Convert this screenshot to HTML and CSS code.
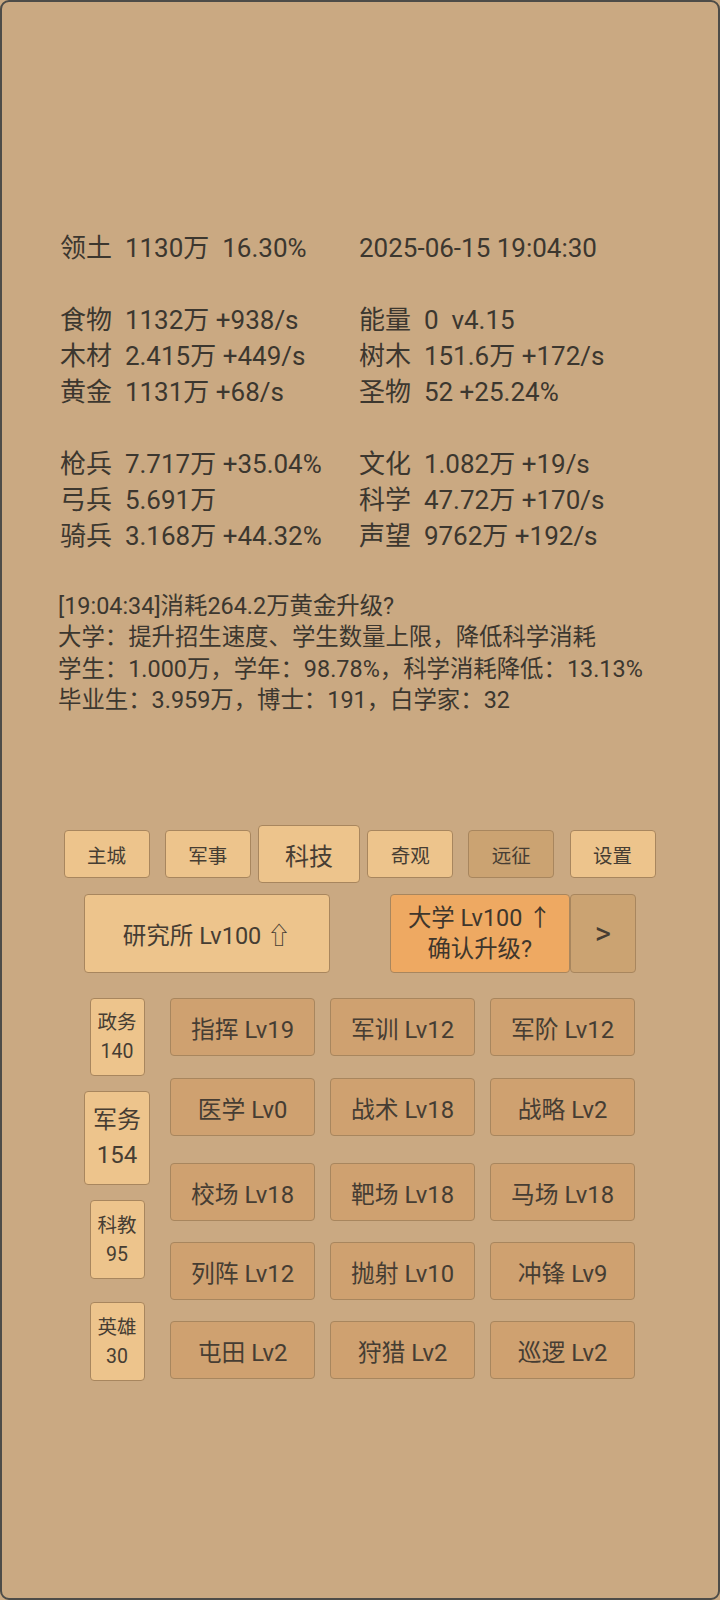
FILE: index.html
```html
<!DOCTYPE html>
<html lang="zh-CN">
<head>
<meta charset="utf-8">
<title>科技</title>
<link rel="stylesheet" href="styles.css">
</head>
<body>
<div class="page">
  <div class="stats">
    <div class="col left">
      <div class="line">领土  1130万  16.30%</div>
      <div class="line"></div>
      <div class="line">食物  1132万 +938/s</div>
      <div class="line">木材  2.415万 +449/s</div>
      <div class="line">黄金  1131万 +68/s</div>
      <div class="line"></div>
      <div class="line">枪兵  7.717万 +35.04%</div>
      <div class="line">弓兵  5.691万</div>
      <div class="line">骑兵  3.168万 +44.32%</div>
    </div>
    <div class="col right">
      <div class="line">2025-06-15 19:04:30</div>
      <div class="line"></div>
      <div class="line">能量  0  v4.15</div>
      <div class="line">树木  151.6万 +172/s</div>
      <div class="line">圣物  52 +25.24%</div>
      <div class="line"></div>
      <div class="line">文化  1.082万 +19/s</div>
      <div class="line">科学  47.72万 +170/s</div>
      <div class="line">声望  9762万 +192/s</div>
    </div>
  </div>

  <div class="log">
    <div class="log-line">[19:04:34]消耗264.2万黄金升级?</div>
    <div class="log-line">大学：提升招生速度、学生数量上限，降低科学消耗</div>
    <div class="log-line">学生：1.000万，学年：98.78%，科学消耗降低：13.13%</div>
    <div class="log-line">毕业生：3.959万，博士：191，白学家：32</div>
  </div>

  <div class="tabs">
    <div class="tab-cell"><div class="tab">主城</div></div>
    <div class="tab-cell"><div class="tab">军事</div></div>
    <div class="tab-cell"><div class="tab active">科技</div></div>
    <div class="tab-cell"><div class="tab">奇观</div></div>
    <div class="tab-cell"><div class="tab dim">远征</div></div>
    <div class="tab-cell"><div class="tab">设置</div></div>
  </div>

  <div class="actions">
    <div class="action-cell">
      <div class="btn-main">研究所 Lv100 ⇧</div>
    </div>
    <div class="action-cell">
      <div class="btn-group">
        <div class="btn-confirm">大学 Lv100 ↑<br>确认升级?</div>
        <div class="btn-next">&gt;</div>
      </div>
    </div>
  </div>

  <div class="bottom">
    <div class="side">
      <div class="side-btn s1">政务<br>140</div>
      <div class="side-btn active">军务<br>154</div>
      <div class="side-btn s3">科教<br>95</div>
      <div class="side-btn s4">英雄<br>30</div>
    </div>
    <div class="grid">
      <div class="grid-row">
        <div class="tech">指挥 Lv19</div>
        <div class="tech">军训 Lv12</div>
        <div class="tech">军阶 Lv12</div>
      </div>
      <div class="grid-row r2">
        <div class="tech">医学 Lv0</div>
        <div class="tech">战术 Lv18</div>
        <div class="tech">战略 Lv2</div>
      </div>
      <div class="grid-row r3">
        <div class="tech">校场 Lv18</div>
        <div class="tech">靶场 Lv18</div>
        <div class="tech">马场 Lv18</div>
      </div>
      <div class="grid-row r4">
        <div class="tech">列阵 Lv12</div>
        <div class="tech">抛射 Lv10</div>
        <div class="tech">冲锋 Lv9</div>
      </div>
      <div class="grid-row r5">
        <div class="tech">屯田 Lv2</div>
        <div class="tech">狩猎 Lv2</div>
        <div class="tech">巡逻 Lv2</div>
      </div>
    </div>
  </div>
</div>
</body>
</html>
```

FILE: styles.css
```css
html, body {
  margin: 0;
  padding: 0;
  background: #caa982;
}

.page {
  box-sizing: border-box;
  width: 720px;
  height: 1600px;
  border: 2px solid #4d4c48;
  border-radius: 9px;
  background: #caa982;
  color: #3c372f;
  font-family: Roboto, "Noto Sans CJK SC", sans-serif;
  overflow: hidden;
}

/* stats */
.stats {
  display: flex;
  padding-top: 228px;
  padding-left: 58px;
}

.col {
  display: flex;
  flex-direction: column;
}

.col.left {
  width: 299px;
}

.line {
  height: 36px;
  line-height: 36px;
  font-size: 26px;
  white-space: pre;
}

/* log */
.log {
  margin-top: 37px;
  padding-left: 56px;
}

.log-line {
  height: 31.3px;
  line-height: 31.3px;
  font-size: 23.4px;
  white-space: pre;
}

/* tabs */
.tabs {
  display: grid;
  grid-template-columns: repeat(6, 101.2px);
  align-items: center;
  margin-top: 109px;
  margin-left: 54px;
  height: 58px;
}

.tab-cell {
  display: flex;
  justify-content: center;
  align-items: center;
}

.tab {
  box-sizing: border-box;
  width: 86px;
  height: 48px;
  border: 1.5px solid #a8865e;
  border-radius: 4px;
  background: #edc48c;
  color: #463d33;
  font-size: 19.5px;
  display: flex;
  align-items: center;
  justify-content: center;
}

.tab.active {
  width: 102px;
  height: 58px;
  font-size: 24px;
}

.tab.dim {
  background: #cba372;
}

/* actions row */
.actions {
  display: grid;
  grid-template-columns: 303.5px 303.5px;
  margin-left: 53px;
  margin-top: 11px;
  height: 79px;
}

.action-cell {
  display: flex;
  justify-content: center;
}

.btn-main {
  box-sizing: border-box;
  width: 246px;
  height: 79px;
  border: 1.5px solid #a8865e;
  border-radius: 4px;
  background: #edc48c;
  color: #463d33;
  font-size: 23.5px;
  display: flex;
  align-items: center;
  justify-content: center;
}

.btn-group {
  display: flex;
  margin-left: 5px;
}

.btn-confirm {
  box-sizing: border-box;
  width: 180px;
  height: 79px;
  border: 1.5px solid #a8865e;
  border-radius: 4px;
  background: #eea962;
  color: #3f362c;
  font-size: 23.4px;
  line-height: 31px;
  text-align: center;
  display: flex;
  align-items: center;
  justify-content: center;
}

.btn-next {
  box-sizing: border-box;
  width: 66px;
  height: 79px;
  border: 1.5px solid #a8865e;
  border-radius: 4px;
  background: #cba372;
  color: #463d33;
  font-size: 31px;
  display: flex;
  align-items: center;
  justify-content: center;
}

/* bottom area */
.bottom {
  display: flex;
  margin-top: 25px;
  margin-left: 79px;
}

.side {
  width: 72px;
  display: flex;
  flex-direction: column;
  align-items: center;
}

.side-btn {
  box-sizing: border-box;
  width: 55px;
  height: 79px;
  border: 1.5px solid #a8865e;
  border-radius: 4px;
  background: #edc48c;
  color: #463d33;
  font-size: 19.5px;
  line-height: 29px;
  text-align: center;
  display: flex;
  align-items: center;
  justify-content: center;
}

.side-btn.s1 { height: 78px; }
.side-btn.active {
  width: 66px;
  height: 94px;
  margin-top: 15px;
  font-size: 24px;
  line-height: 35px;
}
.side-btn.s3 { margin-top: 15px; }
.side-btn.s4 { margin-top: 23px; }

.grid {
  margin-left: 17px;
  display: flex;
  flex-direction: column;
}

.grid-row {
  display: flex;
  gap: 15px;
}

.grid-row.r2 { margin-top: 22px; }
.grid-row.r3 { margin-top: 27px; }
.grid-row.r4 { margin-top: 21px; }
.grid-row.r5 { margin-top: 21px; }

.tech {
  box-sizing: border-box;
  width: 145px;
  height: 58px;
  border: 1.5px solid #a8865e;
  border-radius: 4px;
  background: #cfa170;
  color: #463d33;
  font-size: 23.8px;
  display: flex;
  align-items: center;
  justify-content: center;
}
```
